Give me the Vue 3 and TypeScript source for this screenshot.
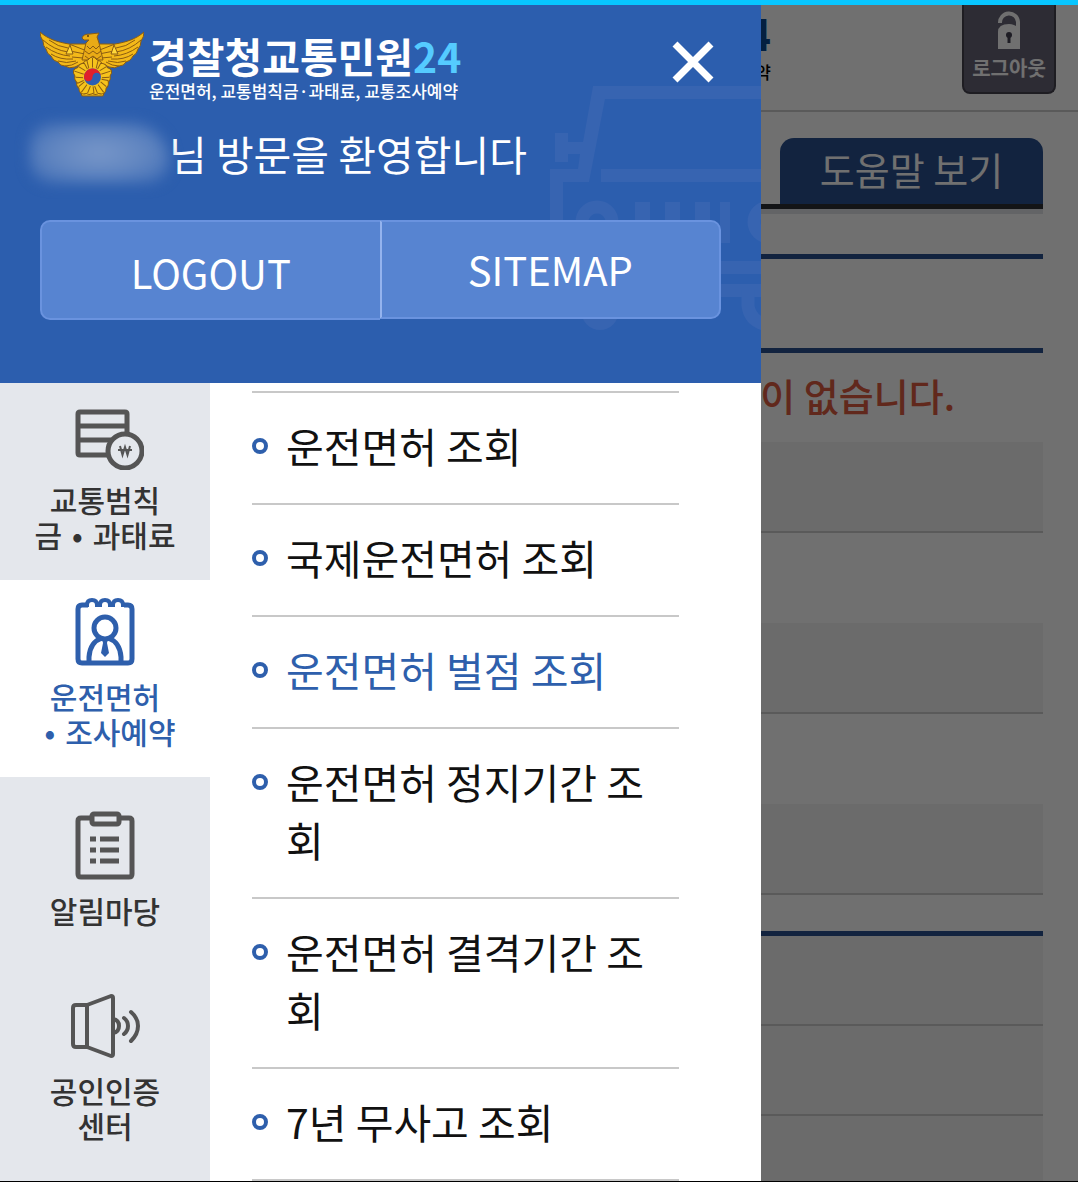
<script setup lang="ts">
import { ref } from 'vue'

interface Category {
  icon: 'fine' | 'license' | 'board' | 'cert'
  label: string
}

const categories: Category[] = [
  { icon: 'fine', label: '교통범칙\n금•과태료' },
  { icon: 'license', label: '운전면허\n•조사예약' },
  { icon: 'board', label: '알림마당' },
  { icon: 'cert', label: '공인인증\n센터' },
]

const links: string[] = [
  '운전면허 조회',
  '국제운전면허 조회',
  '운전면허 벌점 조회',
  '운전면허 정지기간 조회',
  '운전면허 결격기간 조회',
  '7년 무사고 조회',
]

const activeCategory = ref(1)
const activeLink = ref(2)
const petals = [0, 72, 144, 216, 288]
</script>

<template>
  <div class="screen">
    <div class="page">
      <header class="page-head">
        <div class="page-brand">
          <strong>4</strong>
          <span>약</span>
        </div>
        <button type="button" class="page-logout">
          <svg width="26" height="38" viewBox="0 0 26 38" aria-hidden="true">
            <path d="M4 12 A9 9 0 0 1 22 11 V22" fill="none" stroke="#fff" stroke-width="4" />
            <path d="M2 38 V21 Q2 13 13 13 Q20 13 24 19 V38 Z" fill="#fff" />
            <circle cx="13" cy="24" r="3" fill="#454253" />
            <path d="M13 24 V32" stroke="#454253" stroke-width="3" />
          </svg>
          <span>로그아웃</span>
        </button>
      </header>
      <main class="page-body">
        <div class="tab-row">
          <a href="#" class="help-tab">도움말 보기</a>
        </div>
        <div class="title-box"></div>
        <p class="notice">이 없습니다.</p>
        <div class="band shaded"></div>
        <div class="band"></div>
        <div class="band shaded"></div>
        <div class="band"></div>
        <div class="band shaded"></div>
        <div class="lower">
          <div class="band shaded"></div>
          <div class="band shaded"></div>
          <div class="band shaded"></div>
        </div>
      </main>
    </div>

    <div class="dim"></div>

    <aside class="drawer">
      <header class="drawer-head">
        <svg class="bus" width="211" height="250" viewBox="550 84 211 250" aria-hidden="true">
          <g fill="#3764b1">
            <path d="M593 86 H761 V99 H605 L589 182 H563 V240 H550 V169 H578 L580 154 H568 V162 H555 V133 H568 V142 H583 Z" />
            <rect x="601" y="169" width="160" height="13" />
            <rect x="635" y="202" width="15" height="41" />
            <rect x="665" y="202" width="15" height="41" />
            <rect x="695" y="202" width="15" height="41" />
            <rect x="720" y="202" width="10" height="41" />
            <rect x="700" y="261" width="61" height="13" />
            <rect x="700" y="284" width="61" height="13" />
            <ellipse cx="600" cy="310" rx="19" ry="20" />
          </g>
          <g fill="none" stroke="#3764b1" stroke-width="13">
            <circle cx="597" cy="222" r="15" />
            <circle cx="769" cy="222" r="15" />
            <path d="M748 290 V306 Q750 320 764 324" />
          </g>
        </svg>

        <div class="brand-row">
          <svg class="emblem" width="104" height="66" viewBox="0 0 104 66" aria-hidden="true">
            <g fill="#f3b919" stroke="#8a5c12" stroke-width="1" stroke-linejoin="round">
              <path d="M30 13 H74 L66 31 H38 Z" />
              <path d="M0 1 C8 8 17 11 29 13 L47 20 L45 31 L35 36 Q29 38 25 35 Q20 35 18 31 Q13 30 11 25 Q7 23 6 18 Q3 15 3 10 Q0 6 0 1 Z" />
              <path d="M104 1 C96 8 87 11 75 13 L57 20 L59 31 L69 36 Q75 38 79 35 Q84 35 86 31 Q91 30 93 25 Q97 23 98 18 Q101 15 101 10 Q104 6 104 1 Z" />
            </g>
            <g fill="none" stroke="#8a5c12" stroke-width="1">
              <path d="M3 9 Q14 19 28 21 M6 16 Q17 24 30 25 M11 23 Q20 29 33 28 M18 30 Q26 33 36 30 M9 9 Q18 16 28 17 M25 35 Q32 35 38 31 M30 20 L45 23 M32 26 L43 27" />
              <path d="M101 9 Q90 19 76 21 M98 16 Q87 24 74 25 M93 23 Q84 29 71 28 M86 30 Q78 33 68 30 M95 9 Q86 16 76 17 M79 35 Q72 35 66 31 M74 20 L59 23 M72 26 L61 27" />
            </g>
            <path d="M30 14 L33 23 H26 Z M74 14 L78 23 H71 Z" fill="#ffd83a" stroke="#8a5c12" stroke-width="1" />
            <path d="M42 7 Q43 3 50 3 L59 2 L57 6 L59 12 L63 29 H42 L46 12 L49 9 L44 9 Z" fill="#e9ab16" stroke="#8a5c12" stroke-width="1" />
            <path d="M47 15 L50 18 L53 15 L56 18 L59 15 M45 20 L49 23 L53 20 L57 23 L61 20 M45 25 L49 28 L53 25 L57 28 L61 25" fill="none" stroke="#8a5c12" stroke-width="1" />
            <circle cx="48" cy="5" r="1" fill="#5b3a08" />
            <g fill="#f6c31c" stroke="#8a5c12" stroke-width="1">
              <path d="M40 59 L52 52 L65 59 L63 65 H42 Z" />
              <g v-for="angle in petals" :key="angle" :transform="`rotate(${angle} 52.5 46)`">
                <path d="M52.5 45 L42 34 Q44 29 48 29 Q52.5 23 57 29 Q61 29 63 34 Z" />
                <path d="M49 38 L47 30 M52.5 37 V27 M56 38 L58 30" />
              </g>
            </g>
            <circle cx="52.5" cy="46" r="9.5" fill="#f6c31c" />
            <circle cx="52.5" cy="46" r="8.5" fill="#2c5fb3" />
            <path d="M44 46 A8.5 8.5 0 0 1 61 46 A4.25 4.25 0 0 0 52.5 46 A4.25 4.25 0 0 1 44 46 Z" fill="#e0202c" />
          </svg>
          <div class="brand">
            <strong class="brand-name">경찰청교통민원<em>24</em></strong>
            <span class="brand-sub">운전면허, 교통범칙금·과태료, 교통조사예약</span>
          </div>
          <button type="button" class="close" aria-label="닫기">
            <svg width="42" height="42" viewBox="0 0 42 42" aria-hidden="true">
              <path d="M3 3 L39 39 M39 3 L3 39" stroke="#fff" stroke-width="7" fill="none" />
            </svg>
          </button>
        </div>

        <p class="welcome"><span class="masked"></span>님 방문을 환영합니다</p>

        <div class="head-actions">
          <button type="button" class="action logout">LOGOUT</button>
          <a href="#" class="action sitemap">SITEMAP</a>
        </div>
      </header>

      <div class="drawer-body">
        <nav class="categories">
          <button
            v-for="(item, i) in categories"
            :key="item.icon"
            type="button"
            class="category"
            :class="{ active: i === activeCategory }"
            @click="activeCategory = i"
          >
            <svg class="cat-icon" width="78" height="70" viewBox="-3 0 78 70" aria-hidden="true">
              <g v-if="item.icon === 'fine'" fill="none" stroke="currentColor" stroke-width="5">
                <path d="M40 55 H11 Q9 55 9 53 V14 Q9 12 11 12 H56 Q58 12 58 14 V34 M9 26 H58 M9 40 H42" />
                <circle cx="56" cy="51" r="17" />
                <path d="M51 46 L53.5 55 L56 47 L58.5 55 L61 46 M49 50 H63" stroke-width="2" />
              </g>
              <g v-else-if="item.icon === 'license'" fill="none" stroke="currentColor" stroke-width="5">
                <path d="M19 8 H13 Q9 8 9 12 V62 Q9 66 13 66 H59 Q63 66 63 62 V12 Q63 8 59 8 H55" />
                <path d="M18 10 V8 Q18 3 23 3 Q28 3 28 8 V10 M31 10 V8 Q31 3 36 3 Q41 3 41 8 V10 M44 10 V8 Q44 3 49 3 Q54 3 54 8 V10" stroke-width="4" />
                <path d="M27 8 H32 M40 8 H45" stroke-width="4" />
                <circle cx="36" cy="31" r="11" />
                <path d="M20 66 V60 Q21 45 33 41 M52 66 V60 Q51 45 39 41" stroke-width="5" />
                <path d="M33 41 H39 L38 46 L40 56 L36 60 L32 56 L34 46 Z" fill="currentColor" stroke="none" />
              </g>
              <g v-else-if="item.icon === 'board'" fill="none" stroke="currentColor" stroke-width="5">
                <path d="M21 7 H12 Q9 7 9 10 V63 Q9 66 12 66 H60 Q63 66 63 63 V10 Q63 7 60 7 H51" />
                <rect x="23" y="3" width="27" height="10" rx="2" />
                <path d="M21 28 H27 M31 28 H50 M21 39 H27 M31 39 H50 M21 50 H27 M31 50 H50" />
              </g>
              <g v-else fill="none" stroke="currentColor" stroke-width="4" stroke-linejoin="round">
                <path d="M18 14 H7 Q4 14 4 17 V53 Q4 56 7 56 H18 Z" />
                <path d="M18 14 L42 5 Q44 5 44 7 V63 Q44 65 42 65 L18 56" />
                <path d="M44 28 Q50 29 50 35 Q50 41 44 42" />
                <path d="M55 27 Q59 30 59 35 Q59 40 55 43 M62 21 Q69 27 69 35 Q69 43 62 50" stroke-linecap="round" />
              </g>
            </svg>
            <span class="cat-label"><template v-for="(part, n) in item.label.split('•')" :key="n"><span v-if="n > 0" class="dot">•</span>{{ part }}</template></span>
          </button>
        </nav>

        <ul class="links">
          <li v-for="(label, i) in links" :key="label">
            <a href="#" :class="{ active: i === activeLink }" @click.prevent="activeLink = i">{{ label }}</a>
          </li>
        </ul>
      </div>
    </aside>
  </div>
</template>

<style>
body {
  margin: 0;
  background: #fff;
}
</style>

<style scoped>
*,
*::before {
  box-sizing: border-box;
}

.screen {
  position: relative;
  min-height: 100vh;
  overflow: hidden;
  border-top: 5px solid #08c6ff;
  border-bottom: 1px solid #000;
  background: #fff;
  font-family: 'Noto Sans CJK KR', 'Noto Sans', sans-serif;
}

button {
  font-family: inherit;
  cursor: pointer;
}

a {
  text-decoration: none;
}

/* page underneath the drawer */
.page {
  position: absolute;
  inset: 0;
}

.page-head {
  display: flex;
  justify-content: space-between;
  align-items: flex-start;
  height: 107px;
  padding-right: 22px;
  border-bottom: 2px solid #ccc;
}

.page-brand {
  display: flex;
  flex-direction: column;
  align-items: flex-end;
  width: 73%;
  padding-top: 5px;
}

.page-brand strong {
  color: #0a4a94;
  font-family: Roboto, sans-serif;
  font-size: 44px;
  line-height: 52px;
}

.page-brand span {
  font-size: 17px;
  line-height: 20px;
  font-weight: 500;
}

.page-logout {
  display: flex;
  flex-direction: column;
  align-items: center;
  width: 94px;
  height: 89px;
  padding: 6px 0 0;
  border: 2px solid #45434f;
  border-top: 0;
  border-radius: 0 0 8px 8px;
  background: #686577;
  color: #fff;
}

.page-logout span {
  margin-top: 4px;
  font-size: 20px;
  line-height: 30px;
  font-weight: 700;
}

.page-body {
  padding: 26px 35px 0;
}

.tab-row {
  display: flex;
  justify-content: flex-end;
  border-bottom: 5px solid #2c2e33;
  box-shadow: 0 5px 0 #e2e3e8;
}

.help-tab {
  width: 263px;
  height: 66px;
  border-radius: 14px 14px 0 0;
  background: #295090;
  color: #fff;
  font-size: 38px;
  line-height: 62px;
  text-align: center;
}

.title-box {
  height: 99px;
  margin-top: 45px;
  border-top: 5px solid #295090;
  border-bottom: 5px solid #295090;
}

.notice {
  height: 89px;
  margin: 0;
  padding-right: 88px;
  color: #dc5c40;
  font-size: 38px;
  line-height: 84px;
  font-weight: 500;
  text-align: right;
}

.band {
  height: 90px;
}

.band.shaded {
  height: 91px;
  border-bottom: 2px solid #ccc;
  background: #f3f3f3;
}

.lower {
  margin-top: 36px;
  border-top: 5px solid #295090;
}

.lower .band.shaded {
  height: 90px;
}

.dim {
  position: absolute;
  inset: 0;
  background: rgba(0, 0, 0, 0.56);
}

/* drawer */
.drawer {
  position: relative;
  display: flex;
  flex-direction: column;
  width: 70.6%;
  min-height: calc(100vh - 6px);
  background: #fff;
}

.drawer-head {
  position: relative;
  height: 378px;
  padding: 24px 40px 0;
  background: #2c5eae;
  color: #fff;
}

.bus {
  position: absolute;
  top: 79px;
  right: 0;
}

.brand-row {
  position: relative;
  display: flex;
  align-items: flex-start;
}

.emblem {
  flex: none;
  margin-top: 2px;
}

.brand {
  display: flex;
  flex-direction: column;
  margin-left: 5px;
}

.brand-name {
  font-size: 41px;
  line-height: 52px;
  font-weight: 700;
  white-space: nowrap;
}

.brand-name em {
  color: #55cbff;
  font-style: normal;
}

.brand-sub {
  font-size: 17px;
  line-height: 20px;
  font-weight: 500;
  white-space: nowrap;
}

.close {
  display: flex;
  margin: 12px 7px 0 auto;
  padding: 0;
  border: 0;
  background: none;
}

.welcome {
  position: relative;
  display: flex;
  align-items: center;
  margin: 17px 0 0 -10px;
  font-size: 41px;
  line-height: 70px;
  white-space: nowrap;
}

.masked {
  width: 139px;
  height: 60px;
  border-radius: 30px 50px 30px 30px;
  background: radial-gradient(ellipse at center, #7897c9 0%, #6085c0 50%, #3b69b3 100%);
  filter: blur(7px);
}

.head-actions {
  position: relative;
  display: flex;
  align-items: flex-start;
  margin-top: 32px;
}

.action {
  flex: 1;
  border: 2px solid #6a93df;
  background: #5784d1;
  color: #fff;
  font-size: 40px;
  font-weight: 400;
  text-align: center;
}

.logout {
  height: 100px;
  padding: 4px 0 0;
  border-right: 0;
  border-radius: 10px 0 0 10px;
}

.sitemap {
  height: 99px;
  border-left-color: #94b3ee;
  border-radius: 0 10px 10px 0;
  line-height: 94px;
}

.drawer-body {
  display: flex;
  flex: 1;
}

.categories {
  flex: none;
  width: 210px;
  background: #e4e7ec;
}

.category {
  display: flex;
  flex-direction: column;
  align-items: center;
  justify-content: center;
  width: 100%;
  height: 197px;
  padding: 0 0 12px;
  border: 0;
  background: none;
  color: #555;
}

.cat-icon {
  margin-bottom: 12px;
}

.cat-label {
  color: #333;
  font-size: 30px;
  line-height: 35px;
  font-weight: 500;
  white-space: pre-line;
}

.dot {
  margin: 0 10px;
}

.category.active {
  background: #fff;
  color: #2e5fac;
}

.category.active .cat-label {
  color: #2e5fac;
}

.links {
  flex: 1;
  margin: 8px 82px 0 42px;
  padding: 0;
  border-top: 2px solid #c8c8c8;
  list-style: none;
}

.links li {
  border-bottom: 2px solid #c8c8c8;
}

.links a {
  display: flex;
  align-items: flex-start;
  padding: 23px 0 29px;
  color: #111;
  font-size: 41px;
  line-height: 58px;
}

.links a::before {
  content: '';
  flex: none;
  width: 16px;
  height: 16px;
  margin: 22px 18px 0 0;
  border: 4px solid #2e5fac;
  border-radius: 50%;
}

.links a.active {
  color: #2e5fac;
}
</style>
